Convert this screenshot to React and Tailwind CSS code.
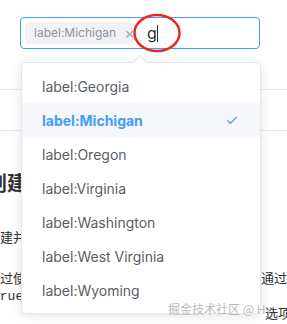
import { useState } from "react";

const options = [
  "label:Georgia",
  "label:Michigan",
  "label:Oregon",
  "label:Virginia",
  "label:Washington",
  "label:West Virginia",
  "label:Wyoming",
];

export default function App() {
  const [selected] = useState("label:Michigan");

  return (
    <div
      className="relative w-[287px] h-[324px] overflow-hidden bg-white"
      style={{ fontFamily: "Inter, 'Noto Sans CJK SC', sans-serif" }}
    >
      {/* SELECT INPUT */}
      <div className="pt-[17px] pl-[20px]">
        <div className="relative w-[240px] h-[32px] border border-[#409eff] rounded flex items-center pl-[4px]">
          <span className="h-[22px] w-[108px] flex items-center bg-[#f0f2f5] rounded pl-[9px] text-[12px] text-[#909399]">
            label:Michigan
            <span className="ml-[8px] text-[16px] leading-none text-[#a8abb2]">×</span>
          </span>
          <span className="ml-[14px] text-[16px] text-[#303133] flex items-center">
            g<span className="inline-block w-[1px] h-[17px] bg-[#303133]" />
          </span>

          {/* RED CIRCLE */}
          <svg
            className="absolute left-[111px] top-[-5px]"
            width="50"
            height="40"
            viewBox="0 0 50 40"
          >
            <ellipse cx="25" cy="20" rx="22.5" ry="18" fill="none" stroke="#e8291c" strokeWidth="2.5" />
          </svg>
        </div>
      </div>

      {/* BACKGROUND PAGE */}
      <div className="mt-[40px] h-px bg-[#e4e7ed]" />
      <div className="mt-[40px] h-px bg-[#e4e7ed]" />
      <h2
        className="mt-[40px] ml-[-13px] text-[20px] font-bold leading-[24px] text-[#303133]"
        style={{ fontFamily: "'Noto Sans CJK SC', sans-serif" }}
      >
        创建条目
      </h2>
      <div style={{ fontFamily: "'Noto Sans CJK SC', sans-serif" }} className="text-[13px] text-[#303133]">
        <p className="mt-[32px] leading-[20px] whitespace-nowrap">建并选择新的条目</p>
        <div className="mt-[22px] flex justify-between leading-[18px] whitespace-nowrap">
          <span>过使用</span>
          <span>通过</span>
        </div>
        <div className="mt-[2px] flex justify-between whitespace-nowrap">
          <span className="ml-[-8px] leading-[16px]" style={{ fontFamily: "'Liberation Mono', monospace" }}>
            true
          </span>
        </div>
        <div className="flex justify-end leading-[16px] whitespace-nowrap">
          <span className="mr-[-4px]">选项</span>
        </div>
      </div>

      {/* DROPDOWN */}
      <div className="absolute left-[21px] top-[62px] w-[240px] bg-white border border-[#e4e7ed] rounded shadow-[0_2px_12px_rgba(0,0,0,0.1)] py-[6px]">
        <div className="absolute left-[113px] top-[-6px] w-[10px] h-[10px] bg-white border-l border-t border-[#e4e7ed] rotate-45" />
        {options.map((o) => {
          const active = o === selected;
          return (
            <div
              key={o}
              className={`h-[34px] flex items-center justify-between pl-[20px] pr-[22px] text-[14px] ${
                active ? "bg-[#f5f7fa] text-[#409eff] font-bold" : "text-[#5a5e66]"
              }`}
            >
              <span>{o}</span>
              {active && (
                <svg width="12" height="12" viewBox="0 0 12 12">
                  <path d="M1.5 6.5 L4.5 9.5 L10.5 3" fill="none" stroke="#409eff" strokeWidth="1.2" />
                </svg>
              )}
            </div>
          );
        })}
      </div>

      {/* WATERMARK */}
      <div
        className="absolute left-[168px] top-[300px] text-[12px] text-[#9a9a9a]/70 whitespace-nowrap"
        style={{ fontFamily: "'Noto Sans CJK SC', sans-serif" }}
      >
        掘金技术社区 @ Hy
      </div>
    </div>
  );
}
